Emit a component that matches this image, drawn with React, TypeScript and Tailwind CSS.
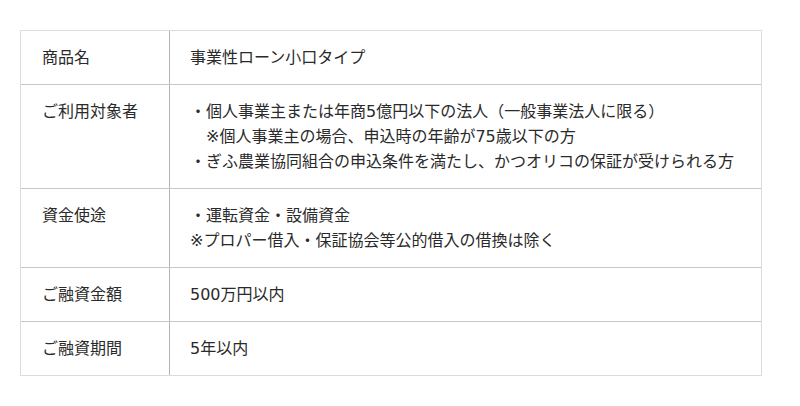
import React from "react";

const rows: { label: string; lines: string[] }[] = [
  { label: "商品名", lines: ["事業性ローン小口タイプ"] },
  {
    label: "ご利用対象者",
    lines: [
      "・個人事業主または年商5億円以下の法人（一般事業法人に限る）",
      "　※個人事業主の場合、申込時の年齢が75歳以下の方",
      "・ぎふ農業協同組合の申込条件を満たし、かつオリコの保証が受けられる方",
    ],
  },
  {
    label: "資金使途",
    lines: ["・運転資金・設備資金", "※プロパー借入・保証協会等公的借入の借換は除く"],
  },
  { label: "ご融資金額", lines: ["500万円以内"] },
  { label: "ご融資期間", lines: ["5年以内"] },
];

export default function App() {
  return (
    <div
      className="w-[800px] h-[406px] bg-white pt-[30px] pl-[20px]"
      style={{ fontFamily: '"DejaVu Sans", "Noto Sans CJK JP", sans-serif' }}
    >
      <div className="w-[742px] border border-[#dcdcdc] text-[16px] leading-[25px] text-[#2a2a2a]">
        {rows.map((r, i) => (
          <div
            key={i}
            className={
              "flex " + (i < rows.length - 1 ? "border-b border-[#c6c6c6]" : "")
            }
          >
            <div className="w-[149px] shrink-0 py-[14px] pl-[21px] border-r border-[#b4b4b4]">
              {r.label}
            </div>
            <div className="flex-1 py-[14px] pl-[20px]">
              {r.lines.map((l, j) => (
                <div key={j} className="whitespace-pre">{l}</div>
              ))}
            </div>
          </div>
        ))}
      </div>
    </div>
  );
}
